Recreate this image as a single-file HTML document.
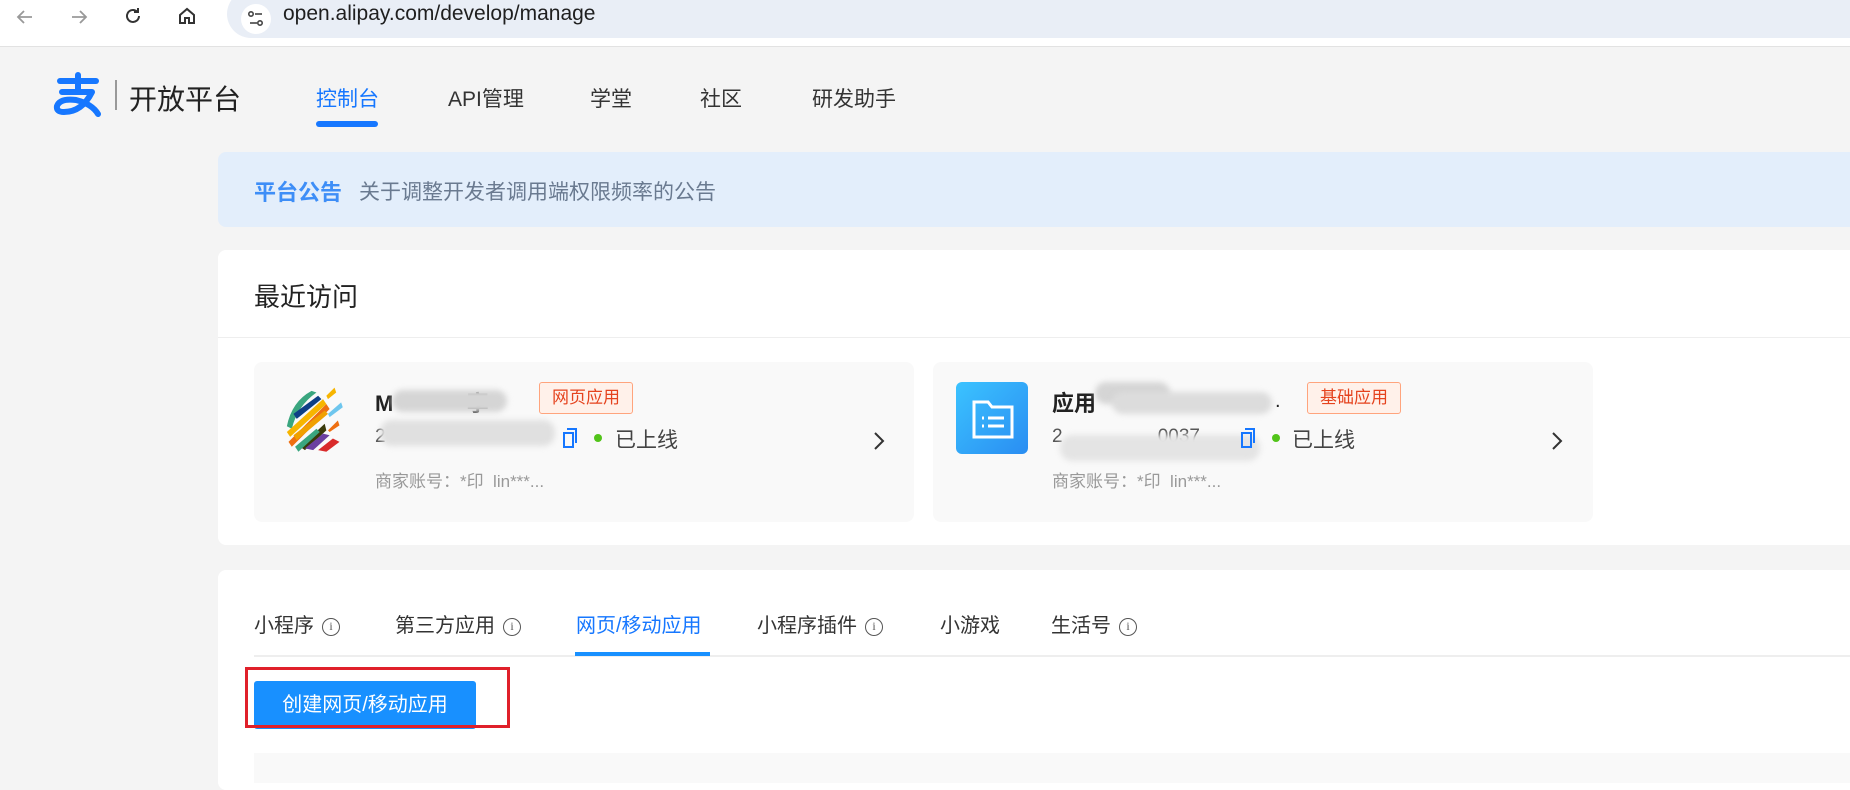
<!DOCTYPE html>
<html><head><meta charset="utf-8"><style>
*{margin:0;padding:0;box-sizing:border-box}
body{width:1850px;height:779px;overflow:hidden;background:#f4f4f4;font-family:"Liberation Sans","Noto Sans CJK SC",sans-serif;position:relative;color:#333}
.abs{position:absolute}
.bar{left:0;top:0;width:1850px;height:47px;background:#fff;border-bottom:1px solid #e2e2e2}
.url{left:227px;top:-10px;width:1700px;height:48px;background:#e9eef6;border-radius:24px}
.tab{position:absolute;top:609px;font-size:20px;color:#333;white-space:nowrap}
.info{display:inline-block;width:18px;height:18px;border:1.5px solid #555;border-radius:50%;font-size:12px;line-height:15px;text-align:center;margin-left:8px;vertical-align:2px;color:#555;font-family:"Liberation Serif",serif}
.card{background:#f9f9f9;border-radius:8px}
.tag{border:1px solid #ffa47d;background:#fff1ea;color:#e5431e;font-size:17px;border-radius:3px;text-align:center;line-height:30px}
.blur{background:#d5d5d5;border-radius:12px;filter:blur(3px)}
</style></head><body>
<div class="abs bar"></div>
<div class="abs url"></div>
<div class="abs" style="left:241px;top:4px;width:30px;height:30px;background:#fff;border-radius:50%"></div>
<svg class="abs" style="left:246px;top:9px" width="20" height="20" viewBox="0 0 20 20" fill="none" stroke="#444" stroke-width="1.6"><circle cx="5" cy="5" r="2.2"/><line x1="9" y1="5" x2="16" y2="5"/><circle cx="14" cy="14" r="2.2"/><line x1="4" y1="14" x2="11" y2="14"/></svg>
<div class="abs" style="left:283px;top:2px;font-size:21px;color:#1f1f1f">open.alipay.com/develop/manage</div>
<svg class="abs" style="left:14px;top:6px" width="22" height="22" viewBox="0 0 22 22" fill="none" stroke="#999" stroke-width="1.8"><path d="M18 11H4M10 5l-6 6 6 6"/></svg>
<svg class="abs" style="left:68px;top:6px" width="22" height="22" viewBox="0 0 22 22" fill="none" stroke="#999" stroke-width="1.8"><path d="M4 11h14M12 5l6 6-6 6"/></svg>
<svg class="abs" style="left:122px;top:5px" width="22" height="22" viewBox="0 0 22 22" fill="none" stroke="#333" stroke-width="2"><path d="M17 11a6 6 0 1 1-2-4.5"/><path d="M16 3v4h-4"/></svg>
<svg class="abs" style="left:176px;top:5px" width="22" height="22" viewBox="0 0 22 22" fill="none" stroke="#333" stroke-width="2"><path d="M4 10l7-6 7 6v8h-5v-5h-4v5H4z"/></svg>

<svg class="abs" style="left:52px;top:72px" width="52" height="46" viewBox="0 0 52 46" fill="none" stroke="#1677ff" stroke-width="6" stroke-linecap="round" stroke-linejoin="round"><path d="M8 9h36"/><path d="M26 3v14"/><path d="M10 20h30 Q30 40 12 40 Q4 40 5 34 Q8 26 24 28 Q40 32 46 42"/></svg>
<div class="abs" style="left:115px;top:80px;width:2px;height:30px;background:#999"></div>
<div class="abs" style="left:129px;top:78px;font-size:28px;color:#222">开放平台</div>
<div class="abs" style="left:316px;top:83px;font-size:21px;color:#1677ff">控制台</div>
<div class="abs" style="left:316px;top:121px;width:62px;height:6px;border-radius:3px;background:#1677ff"></div>
<div class="abs" style="left:448px;top:83px;font-size:21px;color:#333">API管理</div>
<div class="abs" style="left:590px;top:83px;font-size:21px;color:#333">学堂</div>
<div class="abs" style="left:700px;top:83px;font-size:21px;color:#333">社区</div>
<div class="abs" style="left:812px;top:83px;font-size:21px;color:#333">研发助手</div>

<div class="abs" style="left:218px;top:152px;width:1640px;height:75px;background:#e3eefb;border-radius:8px"></div>
<div class="abs" style="left:254px;top:175px;font-size:22px;font-weight:bold;color:#3e8ef7">平台公告</div>
<div class="abs" style="left:359px;top:176px;font-size:21px;color:#6a7a90">关于调整开发者调用端权限频率的公告</div>

<div class="abs" style="left:218px;top:250px;width:1640px;height:295px;background:#fff;border-radius:8px"></div>
<div class="abs" style="left:254px;top:277px;font-size:26px;color:#222">最近访问</div>
<div class="abs" style="left:218px;top:337px;width:1640px;height:1px;background:#eee"></div>

<div class="abs card" style="left:254px;top:362px;width:660px;height:160px"></div>
<svg class="abs" style="left:277px;top:381px" width="74" height="74" viewBox="0 0 90 90">
<path d="M12 55 Q18 25 42 12 L48 14 Q25 30 18 58z" fill="#3aa67f"/>
<path d="M20 40 L50 18 L54 22 L24 46z" fill="#0e3f86"/>
<path d="M12 62 L56 22 L60 28 L16 68z" fill="#f7b500"/>
<path d="M14 74 L60 28 L64 34 L18 80z" fill="#ee6f11"/>
<path d="M20 66 L58 36 L62 40 L24 72z" fill="#f0a000"/>
<path d="M28 80 L58 52 L60 60 L34 84z" fill="#3a3a0a"/>
<path d="M22 80 L48 58 L52 62 L26 86z" fill="#3aa67f"/>
<path d="M34 82 L56 64 L64 66 L44 84z" fill="#6b3fa0"/>
<path d="M50 84 L68 70 L76 74 L60 86z" fill="#d92b2b"/>
<path d="M60 18 L70 8 L72 14 L62 22z" fill="#f7b500"/>
<path d="M62 40 L78 26 L80 32 L64 44z" fill="#6ec6ee"/>
<path d="M62 60 L74 48 L76 54 L64 62z" fill="#ee6f11"/>
</svg>
<div class="abs" style="left:375px;top:386px;font-size:22px;font-weight:bold;color:#222">M<span style="color:transparent">aaaaaa</span>享</div>
<div class="abs blur" style="left:392px;top:390px;width:115px;height:22px"></div>
<div class="abs tag" style="left:539px;top:382px;width:94px;height:32px">网页应用</div>
<div class="abs" style="left:375px;top:426px;font-size:19px;color:#555">2</div>
<div class="abs blur" style="left:380px;top:420px;width:175px;height:26px;background:#e0e0e0"></div>
<svg class="abs" style="left:562px;top:427px" width="16" height="22" viewBox="0 0 16 22" fill="none" stroke="#1677ff" stroke-width="2"><path d="M5 2h9v14"/><path d="M2 6h9v14H2z"/></svg>
<div class="abs" style="left:594px;top:434px;width:8px;height:8px;border-radius:50%;background:#52c41a"></div>
<div class="abs" style="left:615px;top:424px;font-size:21px;color:#444">已上线</div>
<svg class="abs" style="left:872px;top:430px" width="14" height="22" viewBox="0 0 14 22" fill="none" stroke="#333" stroke-width="2"><path d="M3 3l8 8-8 8"/></svg>
<div class="abs" style="left:375px;top:467px;font-size:17px;color:#999">商家账号：*印&nbsp; lin***...</div>

<div class="abs card" style="left:933px;top:362px;width:660px;height:160px"></div>
<div class="abs" style="left:956px;top:382px;width:72px;height:72px;border-radius:6px;background:linear-gradient(135deg,#3bc3ff,#2a8df2)"></div>
<svg class="abs" style="left:970px;top:398px" width="46" height="42" viewBox="0 0 46 42" fill="none" stroke="#fff" stroke-width="3"><path d="M4 4h14l4 5h20v30H4z"/><line x1="12" y1="20" x2="14" y2="20"/><line x1="18" y1="20" x2="34" y2="20"/><line x1="12" y1="28" x2="14" y2="28"/><line x1="18" y1="28" x2="34" y2="28"/></svg>
<div class="abs" style="left:1052px;top:386px;font-size:22px;font-weight:bold;color:#222">应用</div>
<div class="abs blur" style="left:1095px;top:382px;width:75px;height:22px"></div>
<div class="abs blur" style="left:1112px;top:392px;width:160px;height:22px;background:#dcdcdc"></div>
<div class="abs" style="left:1275px;top:390px;font-size:20px;color:#222">.</div>
<div class="abs tag" style="left:1307px;top:382px;width:94px;height:32px">基础应用</div>
<div class="abs" style="left:1052px;top:426px;font-size:19px;color:#555">2<span style="color:transparent">000000000</span>0037</div>
<div class="abs blur" style="left:1060px;top:435px;width:200px;height:26px;background:#e4e4e4"></div>
<svg class="abs" style="left:1240px;top:427px" width="16" height="22" viewBox="0 0 16 22" fill="none" stroke="#1677ff" stroke-width="2"><path d="M5 2h9v14"/><path d="M2 6h9v14H2z"/></svg>
<div class="abs" style="left:1272px;top:434px;width:8px;height:8px;border-radius:50%;background:#52c41a"></div>
<div class="abs" style="left:1292px;top:424px;font-size:21px;color:#444">已上线</div>
<svg class="abs" style="left:1550px;top:430px" width="14" height="22" viewBox="0 0 14 22" fill="none" stroke="#333" stroke-width="2"><path d="M3 3l8 8-8 8"/></svg>
<div class="abs" style="left:1052px;top:467px;font-size:17px;color:#999">商家账号：*印&nbsp; lin***...</div>

<div class="abs" style="left:218px;top:570px;width:1640px;height:220px;background:#fff;border-radius:8px"></div>
<div class="tab" style="left:254px">小程序<span class="info">i</span></div>
<div class="tab" style="left:395px">第三方应用<span class="info">i</span></div>
<div class="tab" style="left:576px;color:#1677ff">网页/移动应用</div>
<div class="tab" style="left:757px">小程序插件<span class="info">i</span></div>
<div class="tab" style="left:940px">小游戏</div>
<div class="tab" style="left:1051px">生活号<span class="info">i</span></div>
<div class="abs" style="left:254px;top:655px;width:1600px;height:2px;background:#eee"></div>
<div class="abs" style="left:575px;top:652px;width:135px;height:4px;background:#1890ff"></div>
<div class="abs" style="left:254px;top:681px;width:222px;height:48px;background:#1890ff;border-radius:3px;color:#fff;font-size:20px;text-align:center;line-height:48px">创建网页/移动应用</div>
<div class="abs" style="left:245px;top:667px;width:265px;height:61px;border:3px solid #e0202a"></div>
<div class="abs" style="left:254px;top:753px;width:1600px;height:30px;background:#f9f9f9"></div>
</body></html>
